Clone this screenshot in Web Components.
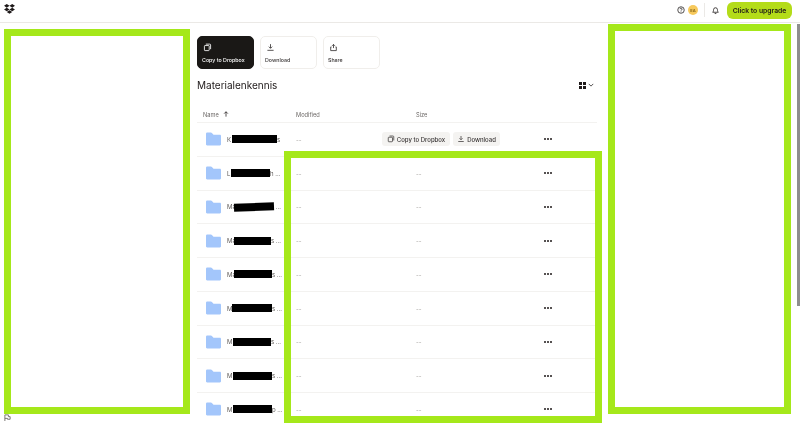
<!DOCTYPE html>
<html lang="en">
<head>
<meta charset="utf-8">
<title>Materialenkennis</title>
<style>
  html, body { margin: 0; height: 100%; overflow: hidden; background: #fff; }
  body { font-family: Inter, "Liberation Sans", sans-serif; color: #1e1919; }
</style>
</head>
<body>
<dbx-page></dbx-page>
<script>
const ICONS = {
  copy: '<rect x="2.5" y="4.5" width="8.500" height="9" rx="1.2" fill="none" stroke="currentColor" stroke-width="1.5"/><path d="M5 2h7a1.500 1.500 0 0 1 1.500 1.500V11" fill="none" stroke="currentColor" stroke-width="1.5"/>',
  download: '<path d="M8 2v7M5 6.500 8 9.500l3-3M2.500 13h11" fill="none" stroke="currentColor" stroke-width="1.5"/>',
  share: '<path d="M8 9V2.500M5.500 5 8 2.500 10.500 5M4.500 7H3v6.500h10V7h-1.500" fill="none" stroke="currentColor" stroke-width="1.5"/>',
};
const icon = (name, size) => `<svg width="${size}" height="${size}" viewBox="0 0 16 16">${ICONS[name]}</svg>`;

class DbxTopbar extends HTMLElement {
  constructor() {
    super();
    this.attachShadow({ mode: 'open' });
    this.shadowRoot.innerHTML = `
      <style>
        :host { display: flex; align-items: center; height: 20px; padding: 0 8px 2px 4px; border-bottom: 1px solid #ebe9e6; background: #fff; filter: blur(.25px); }
        .logo { display: block; margin-top: -2px; }
        .spacer { flex: 1; }
        .right { display: flex; align-items: center; }
        .help { display: block; color: #1e1919; }
        .avatar { display: flex; align-items: center; justify-content: center; width: 10px; height: 10px; margin-left: 3px; border-radius: 50%; background: #f7c95c; color: #8a6a1c; font-size: 4px; font-weight: 700; }
        .sep { width: 1px; height: 14px; margin: 0 6px; background: #ebe9e6; }
        .bell { display: block; margin-right: 7px; }
        .upgrade { display: flex; align-items: center; justify-content: center; width: 65px; height: 17px; border-radius: 6px; background: #b4dc19; color: #1e1919; font-size: 6.800px; font-weight: 600; }
      </style>
      <svg class="logo" width="11" height="10" viewBox="0 0 24 22" fill="#1e1919">
        <path d="M6 0 0 4l6 4 6-4zM18 0l-6 4 6 4 6-4zM0 12l6 4 6-4-6-4zM18 8l-6 4 6 4 6-4zM6 17.500l6 4 6-4-6-4z"/>
      </svg>
      <div class="spacer"></div>
      <div class="right">
        <svg class="help" width="8" height="8" viewBox="0 0 16 16" fill="none" stroke="currentColor" stroke-width="1.500">
          <circle cx="8" cy="8" r="6.500"/><path d="M6 6.300a2 2 0 1 1 3 1.700c-.7.400-1 .8-1 1.500M8 11v1.300"/>
        </svg>
        <div class="avatar">EA</div>
        <div class="sep"></div>
        <svg class="bell" width="9" height="10" viewBox="0 0 16 16" fill="none" stroke="currentColor" stroke-width="1.400">
          <path d="M3 12c1-1 1.500-2 1.500-4.500a3.500 3.500 0 0 1 7 0C11.500 10 12 11 13 12zM6.500 14.300h3"/>
        </svg>
        <div class="upgrade">Click to upgrade</div>
      </div>
    `;
  }
}
customElements.define('dbx-topbar', DbxTopbar);

class DbxActionCard extends HTMLElement {
  constructor() {
    super();
    this.attachShadow({ mode: 'open' });
    this.shadowRoot.innerHTML = `
      <style>
        :host { display: flex; flex-direction: column; justify-content: space-between; box-sizing: border-box; width: 57px; height: 33px; padding: 6px 4px 5px 4px; border: 1px solid #f0eeeb; border-radius: 5px; background: #fff; color: #3a3636; font-size: 5.300px; font-weight: 500; white-space: nowrap; }
        :host([primary]) { background: #1a1816; border-color: #1a1816; color: #fff; }
        svg { display: block; margin-left: 1px; }
      </style>
      ${icon(this.getAttribute('icon'), 9)}
      <div><slot></slot></div>
    `;
  }
}
customElements.define('dbx-action-card', DbxActionCard);

class DbxRow extends HTMLElement {
  constructor() {
    super();
    this.attachShadow({ mode: 'open' });
    const hover = this.hasAttribute('hover');
    const start = this.getAttribute('start');
    const bar = this.getAttribute('bar');
    const tilt = this.getAttribute('tilt') || 0;
    this.shadowRoot.innerHTML = `
      <style>
        :host { display: grid; grid-template-columns: 99px 120px 115px 34px 1fr; align-items: center; height: 33.750px; box-sizing: border-box; border-bottom: 1px solid #f3f2f0; color: #a5a29f; font-size: 6px; }
        .name { display: flex; align-items: center; padding-left: 9px; color: #5a5654; white-space: nowrap; }
        .folder { display: block; flex: none; margin-right: 6px; }
        .pre { display: inline-block; flex: none; width: ${start}px; }
        .bar { display: block; flex: none; width: ${bar}px; height: 8px; background: #000; transform: rotate(${tilt}deg); }
        .dots { display: flex; justify-content: center; gap: .6px; }
        .dots i { width: 2px; height: 2px; border-radius: 50%; background: #1e1919; }
        .size { position: relative; }
        .hover { position: absolute; left: -34px; top: -7px; display: flex; gap: 3px; }
        .chip { display: flex; align-items: center; justify-content: center; gap: 2px; height: 13.500px; border-radius: 3px; background: #f4f3f1; color: #3a3636; font-size: 6px; font-weight: 500; white-space: nowrap; }
        .chip.c { width: 68px; }
        .chip.d { width: 47px; }
      </style>
      <div class="name">
        <svg class="folder" width="15" height="14" viewBox="0 0 16 14"><path d="M0 1.500C0 .7.500 0 1.200 0h4c.5 0 .8.200 1.100.500L8 2.500h6.800c.7 0 1.200.5 1.200 1.200v9c0 .7-.5 1.300-1.200 1.300H1.200C.5 14 0 13.400 0 12.700z" fill="#a3c6fb"/></svg>
        <span class="pre"><slot name="pre"></slot></span>
        <span class="bar"></span>
        <span><slot name="post"></slot></span>
      </div>
      <div>--</div>
      <div class="size">${hover ? `
        <div class="hover">
          <div class="chip c">${icon('copy', 8)}Copy to Dropbox</div>
          <div class="chip d">${icon('download', 8)}Download</div>
        </div>` : '--'}</div>
      <div class="dots"><i></i><i></i><i></i></div>
    `;
  }
}
customElements.define('dbx-row', DbxRow);

class DbxList extends HTMLElement {
  constructor() {
    super();
    this.attachShadow({ mode: 'open' });
    this.shadowRoot.innerHTML = `
      <style>
        :host { display: block; }
        .head { display: grid; grid-template-columns: 99px 120px 1fr; align-items: center; height: 17px; box-sizing: border-box; border-bottom: 1px solid #f3f2f0; color: #6c6866; font-size: 5.700px; }
        .n { display: flex; align-items: center; gap: 4px; padding-left: 6px; }
      </style>
      <div class="head">
        <div class="n">Name <svg width="6" height="6" viewBox="0 0 8 8" fill="none" stroke="#1e1919" stroke-width="1"><path d="M4 7.500V1M1.500 3.500 4 1l2.500 2.500"/></svg></div>
        <div>Modified</div>
        <div>Size</div>
      </div>
      <slot></slot>
    `;
  }
}
customElements.define('dbx-list', DbxList);

class DbxPage extends HTMLElement {
  constructor() {
    super();
    this.attachShadow({ mode: 'open' });
    this.shadowRoot.innerHTML = `
      <style>
        :host { display: block; position: relative; width: 800px; height: 423px; overflow: hidden; }
        main { width: 400px; padding: 13px 0 0 197px; filter: blur(.25px); }
        .actions { display: flex; gap: 6px; }
        .titlebar { display: flex; align-items: center; justify-content: space-between; height: 16px; margin-top: 8px; }
        h1 { margin: 0; color: #1e1919; font-size: 10px; font-weight: 400; }
        .view { display: flex; align-items: center; gap: 2px; padding-right: 3px; }
        .grid { display: grid; grid-template-columns: 3px 3px; gap: 1px; }
        .grid i { width: 3px; height: 3px; background: #1e1919; }
        dbx-list { margin-top: 13px; }
        .mark { position: absolute; box-sizing: border-box; border: 7px solid #a5e81a; background: #fff; }
        .scroll { position: absolute; right: 0; top: 24px; width: 3px; height: 282px; background: #8f8f8f; }
        .flag { position: absolute; left: 4px; top: 414px; display: block; }
      </style>
      <dbx-topbar></dbx-topbar>
      <main>
        <div class="actions">
          <dbx-action-card icon="copy" primary>Copy to Dropbox</dbx-action-card>
          <dbx-action-card icon="download">Download</dbx-action-card>
          <dbx-action-card icon="share">Share</dbx-action-card>
        </div>
        <div class="titlebar">
          <h1>Materialenkennis</h1>
          <div class="view">
            <div class="grid"><i></i><i></i><i></i><i></i></div>
            <svg width="6" height="6" viewBox="0 0 8 8" fill="none" stroke="#1e1919" stroke-width="1"><path d="M1 2.500 4 5.500l3-3"/></svg>
          </div>
        </div>
        <dbx-list>
          <dbx-row hover start="5" bar="45"><span slot="pre">K</span><span slot="post">s</span></dbx-row>
          <dbx-row start="4" bar="39"><span slot="pre">L</span><span slot="post">h ...</span></dbx-row>
          <dbx-row start="7" bar="40" tilt="-2"><span slot="pre">Ma</span><span slot="post">&nbsp;...</span></dbx-row>
          <dbx-row start="7" bar="37"><span slot="pre">Ma</span><span slot="post">s ...</span></dbx-row>
          <dbx-row start="7" bar="38"><span slot="pre">Ma</span><span slot="post">s ...</span></dbx-row>
          <dbx-row start="5" bar="40"><span slot="pre">M</span><span slot="post">s ...</span></dbx-row>
          <dbx-row start="6" bar="38"><span slot="pre">M</span><span slot="post">s ...</span></dbx-row>
          <dbx-row start="6" bar="39"><span slot="pre">M</span><span slot="post">s ...</span></dbx-row>
          <dbx-row start="6" bar="39"><span slot="pre">M</span><span slot="post">p ...</span></dbx-row>
        </dbx-list>
      </main>
      <div class="mark" style="left:4px;top:29px;width:186px;height:385px"></div>
      <div class="mark" style="left:608px;top:24px;width:183px;height:390px"></div>
      <div class="mark" style="left:284px;top:151px;width:318px;height:272px;background:transparent"></div>
      <div class="scroll"></div>
      <svg class="flag" width="7" height="7" viewBox="0 0 8 8" fill="none" stroke="#6c6866" stroke-width="1"><path d="M1 8V1h4v2h2v3H4V5H1"/></svg>
    `;
  }
}
customElements.define('dbx-page', DbxPage);
</script>
</body>
</html>
